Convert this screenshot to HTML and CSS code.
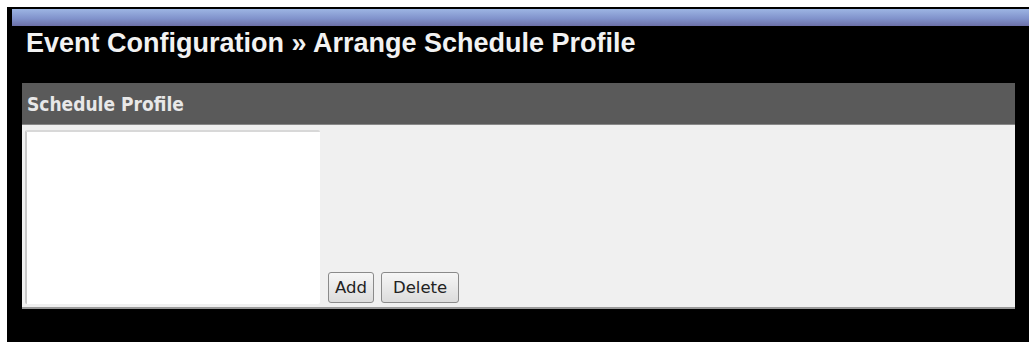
FILE: index.html
```html
<!DOCTYPE html>
<html lang="en">
<head>
    <meta charset="UTF-8">
    <title>Arrange Schedule Profile</title>
    <link rel="stylesheet" href="styles.css">
</head>
<body>

<div class="frame">
    <div class="top-bar"></div>
    <h1 class="page-title">Event Configuration &raquo; Arrange Schedule Profile</h1>

    <div class="panel">
        <div class="panel-head">Schedule Profile</div>
        <div class="panel-body">
            <select class="profile-list" size="10"></select>
            <div class="actions">
                <button class="btn" id="addBtn">Add</button>
                <button class="btn" id="deleteBtn">Delete</button>
            </div>
        </div>
    </div>
</div>

</body>
</html>
```

FILE: styles.css
```css
body {
    margin: 0;
    background-color: #fff;
    font-family: "Liberation Sans", Arial, sans-serif;
}
.frame {
    margin: 7px 0 0 7px;
    height: 335px;
    background-color: #000;
    padding-top: 2px;
    box-sizing: border-box;
    overflow: hidden;
}
.top-bar {
    height: 17px;
    margin-left: 5px;
    background: linear-gradient(to bottom, #9db5e3, #8193cc 55%, #6c70a8);
}
.page-title {
    margin: 0;
    padding: 2px 0 0 19px;
    height: 57px;
    box-sizing: border-box;
    color: #f2f2f2;
    font-size: 27px;
    font-weight: bold;
    line-height: 30px;
}
.panel {
    margin-left: 15px;
    width: 993px;
}
.panel-head {
    height: 42px;
    background-color: #5a5a5a;
    color: #e8e8e8;
    font-family: "DejaVu Sans Condensed", "DejaVu Sans", Verdana, sans-serif;
    font-size: 19px;
    font-weight: bold;
    line-height: 42px;
    padding-left: 5px;
    border-bottom: 1px solid #888;
    box-sizing: border-box;
}
.panel-body {
    height: 184px;
    background-color: #f0f0f0;
    display: flex;
    align-items: flex-end;
    padding: 5px 0 3px 3px;
    box-sizing: border-box;
    border-bottom: 2px solid #9a9a9a;
}
.profile-list {
    width: 295px;
    height: 174px;
    margin: 0;
    background-color: #fff;
    border: none;
    border-left: 2px solid #c8c8c8;
    border-top: 2px solid #d8d8d8;
    outline: none;
}
.actions {
    display: flex;
    gap: 7px;
    margin-left: 8px;
    margin-bottom: 1px;
}
.btn {
    height: 31px;
    padding: 0 11px;
    font-family: "DejaVu Sans", Verdana, sans-serif;
    font-size: 16.5px;
    color: #222;
    background: linear-gradient(to bottom, #f6f6f6, #dcdcdc);
    border: 1px solid #8a8a8a;
    border-radius: 3px;
}
#addBtn {
    padding: 0 6px;
}
```
